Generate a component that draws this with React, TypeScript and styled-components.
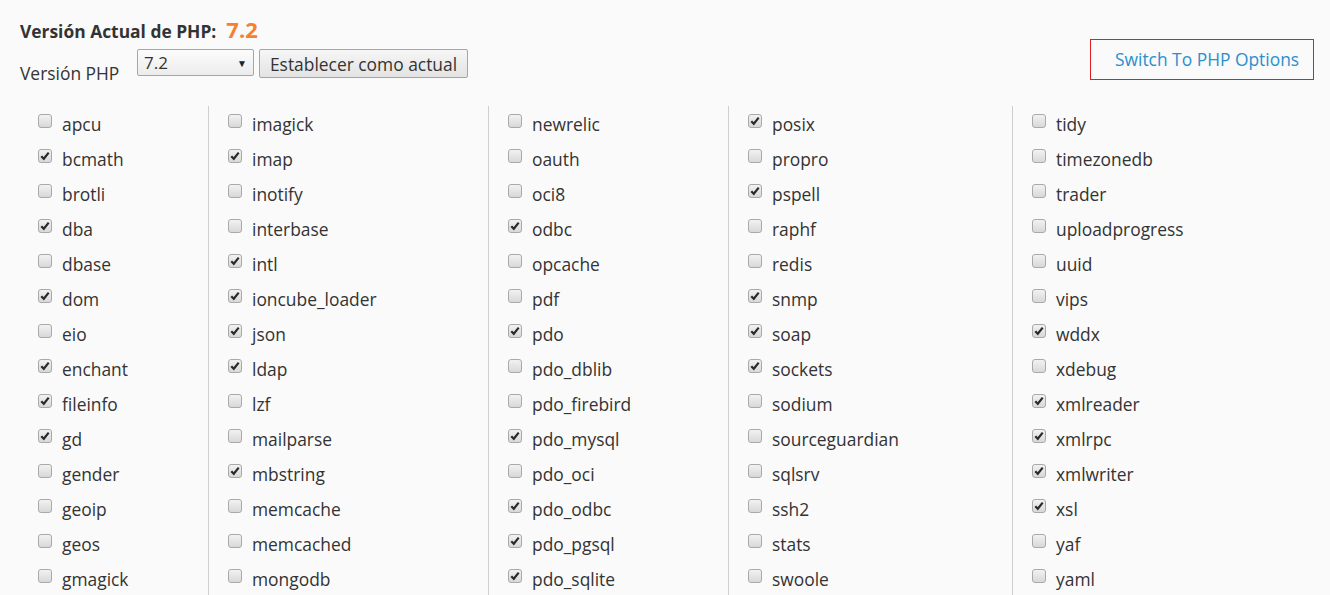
import styled, { createGlobalStyle } from "styled-components";

const GlobalStyle = createGlobalStyle`
  html, body {
    margin: 0;
    padding: 0;
    background: #fafafa;
  }
  body {
    font-family: "Open Sans", "Liberation Sans", sans-serif;
    color: #333;
    font-size: 17.4px;
  }
`;

const Page = styled.main`
  width: 1330px;
  height: 595px;
  overflow: hidden;
  box-sizing: border-box;
  padding: 14px 16px 0 19px;
`;

const Header = styled.div`
  display: flex;
  justify-content: space-between;
  align-items: flex-start;
`;

const VersionInfo = styled.div`
  display: flex;
  flex-direction: column;
  gap: 5px;
`;

const CurrentLine = styled.div`
  display: flex;
  align-items: baseline;
  gap: 10px;
  padding-left: 1px;
  height: 30px;
`;

const CurrentLabel = styled.span`
  font-weight: 700;
  font-size: 17.4px;
`;

const CurrentValue = styled.span`
  font-weight: 700;
  font-size: 22px;
  color: #f7812b;
`;

const SelectorRow = styled.div`
  display: flex;
  align-items: flex-start;
  padding-left: 1px;
`;

const SelectorLabel = styled.span`
  width: 117px;
  padding-top: 12px;
  font-size: 17.4px;
`;

const FakeSelect = styled.div`
  box-sizing: border-box;
  width: 117px;
  height: 27px;
  display: flex;
  align-items: center;
  justify-content: space-between;
  padding: 0 6px 0 6px;
  border: 1px solid #a6a6a6;
  border-radius: 2px;
  background: linear-gradient(#fcfcfc, #ececec);
  font-size: 17px;
  color: #333;
`;

const Arrow = styled.span`
  font-size: 10px;
  color: #222;
`;

const ActionButton = styled.button`
  box-sizing: border-box;
  margin-left: 5px;
  width: 209px;
  height: 29px;
  border: 1px solid #a6a6a6;
  border-radius: 2px;
  background: linear-gradient(#f6f6f6, #e3e3e3);
  font-family: "Open Sans", "Liberation Sans", sans-serif;
  font-size: 17.4px;
  color: #333;
  padding: 0;
`;

const SwitchLink = styled.a`
  box-sizing: border-box;
  margin-top: 25px;
  width: 224px;
  height: 41px;
  display: flex;
  align-items: center;
  padding: 0 0 1px 24px;
  border: 1px solid #e02020;
  color: #2a8fcf;
  font-size: 17.4px;
  text-decoration: none;
`;

const Columns = styled.div`
  display: flex;
  margin-top: 21px;
`;

const Column = styled.ul<{ $w?: number; $first?: boolean }>`
  list-style: none;
  margin: 0;
  padding: 0 0 0 19px;
  width: ${(p) => (p.$w ? `${p.$w}px` : "auto")};
  flex: ${(p) => (p.$w ? "none" : "1")};
  box-sizing: border-box;
  border-left: ${(p) => (p.$first ? "none" : "1px solid #cfcfcf")};
  height: 500px;
`;

const Item = styled.li`
  display: flex;
  align-items: center;
  height: 35px;
`;

const Box = styled.span`
  box-sizing: border-box;
  width: 14px;
  height: 14px;
  margin-top: -5px;
  margin-right: 10px;
  border: 1px solid #a9a9a9;
  border-radius: 3px;
  background: linear-gradient(#f2f2f2, #d8d8d8);
  display: flex;
  align-items: center;
  justify-content: center;
`;

const Name = styled.span`
  font-size: 17.4px;
  color: #333;
`;

const Check = () => (
  <svg width="10" height="10" viewBox="0 0 10 10">
    <path d="M1.3 5.2 L3.8 7.8 L8.7 1.6" fill="none" stroke="#2b2b2b" strokeWidth="2.2" />
  </svg>
);

type Ext = [string, boolean];

const columns: { w?: number; items: Ext[] }[] = [
  {
    w: 189,
    items: [
      ["apcu", false], ["bcmath", true], ["brotli", false], ["dba", true],
      ["dbase", false], ["dom", true], ["eio", false], ["enchant", true],
      ["fileinfo", true], ["gd", true], ["gender", false], ["geoip", false],
      ["geos", false], ["gmagick", false],
    ],
  },
  {
    w: 280,
    items: [
      ["imagick", false], ["imap", true], ["inotify", false], ["interbase", false],
      ["intl", true], ["ioncube_loader", true], ["json", true], ["ldap", true],
      ["lzf", false], ["mailparse", false], ["mbstring", true], ["memcache", false],
      ["memcached", false], ["mongodb", false],
    ],
  },
  {
    w: 240,
    items: [
      ["newrelic", false], ["oauth", false], ["oci8", false], ["odbc", true],
      ["opcache", false], ["pdf", false], ["pdo", true], ["pdo_dblib", false],
      ["pdo_firebird", false], ["pdo_mysql", true], ["pdo_oci", false], ["pdo_odbc", true],
      ["pdo_pgsql", true], ["pdo_sqlite", true],
    ],
  },
  {
    w: 284,
    items: [
      ["posix", true], ["propro", false], ["pspell", true], ["raphf", false],
      ["redis", false], ["snmp", true], ["soap", true], ["sockets", true],
      ["sodium", false], ["sourceguardian", false], ["sqlsrv", false], ["ssh2", false],
      ["stats", false], ["swoole", false],
    ],
  },
  {
    items: [
      ["tidy", false], ["timezonedb", false], ["trader", false], ["uploadprogress", false],
      ["uuid", false], ["vips", false], ["wddx", true], ["xdebug", false],
      ["xmlreader", true], ["xmlrpc", true], ["xmlwriter", true], ["xsl", true],
      ["yaf", false], ["yaml", false],
    ],
  },
];

export default function App() {
  return (
    <>
      <GlobalStyle />
      <Page>
        <Header>
          <VersionInfo>
            <CurrentLine>
              <CurrentLabel>Versión Actual de PHP:</CurrentLabel>
              <CurrentValue>7.2</CurrentValue>
            </CurrentLine>
            <SelectorRow>
              <SelectorLabel>Versión PHP</SelectorLabel>
              <FakeSelect>
                <span>7.2</span>
                <Arrow>▼</Arrow>
              </FakeSelect>
              <ActionButton>Establecer como actual</ActionButton>
            </SelectorRow>
          </VersionInfo>
          <SwitchLink href="#">Switch To PHP Options</SwitchLink>
        </Header>
        <Columns>
          {columns.map((col, i) => (
            <Column key={i} $w={col.w} $first={i === 0}>
              {col.items.map(([name, checked]) => (
                <Item key={name}>
                  <Box>{checked && <Check />}</Box>
                  <Name>{name}</Name>
                </Item>
              ))}
            </Column>
          ))}
        </Columns>
      </Page>
    </>
  );
}
